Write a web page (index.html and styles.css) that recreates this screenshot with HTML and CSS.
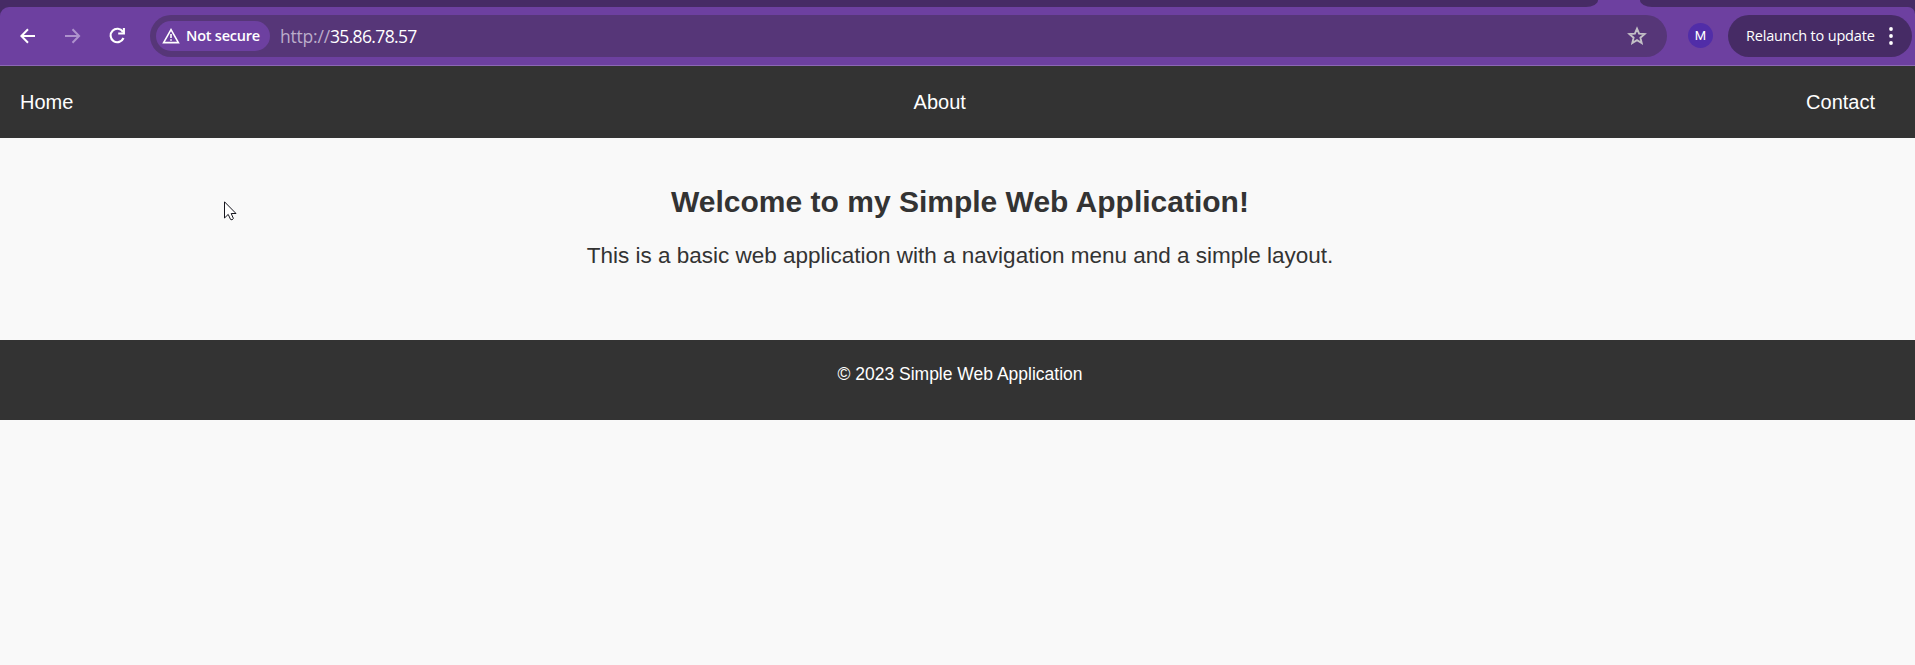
FILE: index.html
```html
<!DOCTYPE html>
<html lang="en">
<head>
<meta charset="utf-8">
<title>Simple Web Application</title>
<link rel="stylesheet" href="styles.css">
</head>
<body>
<div class="browser">
  <div class="tabstrip"><div class="tabs-left"></div><div class="tabs-right"></div></div>
  <div class="toolbar">
    <svg class="icon back" width="16" height="16" viewBox="0 0 16 16"><path d="M15 8H2M8 1.2L1.4 8L8 14.8"/></svg>
    <svg class="icon forward" width="16" height="16" viewBox="0 0 16 16"><path d="M0 8H14M7.5 1.2L14.1 8L7.5 14.8"/></svg>
    <svg class="icon reload" width="18" height="18" viewBox="0 0 18 18"><path d="M14.9 4.8A6.7 6.7 0 1 0 15.5 11M15.9 1V6.5H10.2"/></svg>
    <div class="omnibox">
      <div class="chip">
        <svg class="warn" width="18" height="16" viewBox="0 0 18 16"><path d="M9 1.6L1.6 14.6H16.4Z"/><path d="M9 6V10M9 11.2V12.8"/></svg>
        <span class="chip-label">Not secure</span>
      </div>
      <div class="url"><span class="scheme">http://</span><span class="host">35.86.78.57</span></div>
      <svg class="star" width="20" height="20" viewBox="0 0 20 20"><path d="M10 2.6L12.1 7.6L17.6 8.1L13.4 11.7L14.7 17.1L10 14.2L5.3 17.1L6.6 11.7L2.4 8.1L7.9 7.6Z"/></svg>
    </div>
    <div class="avatar">M</div>
    <div class="relaunch">
      <span class="relaunch-label">Relaunch to update</span>
      <svg class="dots" width="4" height="18" viewBox="0 0 4 18"><circle cx="2" cy="2" r="1.9"/><circle cx="2" cy="9" r="1.9"/><circle cx="2" cy="16" r="1.9"/></svg>
    </div>
  </div>
</div>
<div class="page">
  <nav class="nav"><a>Home</a><a>About</a><a>Contact</a></nav>
  <main class="main">
    <h1>Welcome to my Simple Web Application!</h1>
    <p>This is a basic web application with a navigation menu and a simple layout.</p>
  </main>
  <footer class="footer">© 2023 Simple Web Application</footer>
</div>
<svg class="cursor" width="14" height="20" viewBox="0 0 14 20"><path d="M.5 .8V17L4.2 13.4L6.6 18.5Q8 19.6 9.4 17.5L7.2 12.5H12Z"/></svg>
</body>
</html>
```
FILE: styles.css
```css
* { box-sizing: border-box; }
body {
  margin: 0;
  height: 665px;
  overflow: hidden;
  background: #f9f9f9;
  font-family: "Liberation Sans", Arial, sans-serif;
}
.browser {
  height: 66px;
  background: #462b65;
  font-family: "Open Sans", "Noto Sans", sans-serif;
}
.tabstrip {
  display: flex;
  justify-content: space-between;
  height: 7px;
  background: #6d40a0;
}
.tabs-left { width: 1598px; background: #462b65; border-bottom-right-radius: 12px 7px; }
.tabs-right { width: 275px; background: #462b65; border-bottom-left-radius: 12px 7px; }
.toolbar {
  display: flex;
  align-items: center;
  height: 59px;
  padding: 0 3px 1px 20px;
  background: #6d40a0;
  border-bottom: 1px solid #8c68b5;
  border-radius: 9px 7px 0 0;
}
.icon { flex: none; fill: none; stroke: #fff; stroke-width: 2; }
.forward { margin-left: 29px; stroke: #ae92cd; }
.reload { margin-left: 27px; stroke-width: 2.1; }
.omnibox {
  display: flex;
  flex: none;
  align-items: center;
  width: 1517px;
  height: 42px;
  margin-left: 24px;
  padding: 0 20px 0 6px;
  border-radius: 21px;
  background: #563678;
}
.chip {
  display: flex;
  align-items: center;
  width: 114px;
  height: 30px;
  padding-left: 6px;
  border-radius: 15px;
  background: #6d40a0;
  color: #fff;
}
.warn { fill: none; stroke: #fff; stroke-width: 1.6; }
.chip-label { margin-left: 6px; font-size: 14.5px; font-weight: 600; line-height: 20px; letter-spacing: -.22px; white-space: nowrap; }
.url { margin-left: 10px; padding-top: 1px; font-size: 17.5px; line-height: 24px; white-space: nowrap; }
.scheme { color: #bbadca; letter-spacing: -.2px; }
.host { color: #fff; letter-spacing: -.65px; }
.star { margin-left: auto; fill: none; stroke: #c3c0c6; stroke-width: 1.9; }
.avatar {
  flex: none;
  width: 25px;
  height: 25px;
  margin-left: 21px;
  border-radius: 50%;
  background: #512da8;
  color: #fff;
  font: 13px/26px Roboto, sans-serif;
  text-align: center;
}
.relaunch {
  display: flex;
  flex: none;
  align-items: center;
  width: 184px;
  height: 42px;
  margin-left: 15px;
  padding: 0 19px 0 18px;
  border-radius: 21px;
  background: #462b65;
  color: #fff;
}
.relaunch-label { font-size: 14.5px; line-height: 20px; letter-spacing: -.18px; white-space: nowrap; }
.dots { flex: none; margin-left: auto; fill: #fff; }
.page { width: 1920px; }
.nav {
  display: flex;
  align-items: center;
  justify-content: space-between;
  height: 72px;
  padding: 0 45px 0 20px;
  background: #333;
  color: #fff;
  font-size: 20px;
}
.main { height: 202px; padding-top: 45px; color: #333; text-align: center; }
h1 { margin: 0; font-size: 30px; line-height: 38px; }
p { margin: 19px 0 0; font-size: 22.5px; line-height: 32px; }
.footer {
  height: 80px;
  padding-top: 22px;
  background: #333;
  color: #fff;
  font-size: 17.5px;
  line-height: 24px;
  text-align: center;
}
.cursor { position: absolute; left: 224px; top: 201px; fill: #fff; stroke: #15151d; stroke-width: 1; }
```
